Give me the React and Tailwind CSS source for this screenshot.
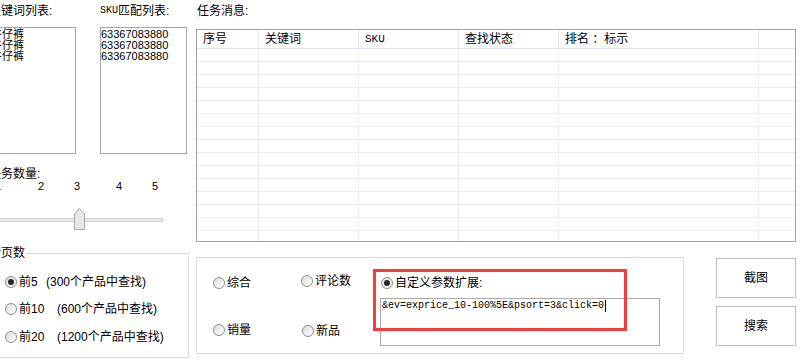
import React from "react";

const columns = ["序号", "关键词", "SKU", "查找状态", "排名 ：标示", ""];
const rows = Array.from({ length: 15 });

function Radio({ checked }) {
  return (
    <span className="flex h-[12px] w-[12px] shrink-0 items-center justify-center rounded-full border border-[#8e8e8e] bg-gradient-to-br from-[#dcdcdc] to-white">
      {checked && <span className="h-[6px] w-[6px] rounded-full bg-[#262626]" />}
    </span>
  );
}

function RadioItem({ checked, children, className = "" }) {
  return (
    <div className={"flex h-[14px] items-center " + className}>
      <Radio checked={checked} />
      <span className="ml-[2px] flex text-[12px] leading-[14px] whitespace-nowrap">{children}</span>
    </div>
  );
}

function ListBox({ items, mono }) {
  return (
    <div className="h-[127px] w-[87px] overflow-hidden border border-[#a6a6a6] bg-white pt-[1px]">
      {items.map((it, i) => (
        <div key={i} className={mono ? "text-[11px] leading-[11px]" : "text-[11px] leading-[11px] pl-[1px]"}>
          {it}
        </div>
      ))}
    </div>
  );
}

function TaskTable() {
  // 表格列宽: 62 / 100 / 100 / 100 / 200 / 36
  const grid = "grid grid-cols-[62px_100px_100px_100px_200px_36px]";
  return (
    <div className="mt-[12px] h-[213px] w-[600px] overflow-hidden border border-[#a0a0a0] bg-white">
      <div className={grid + " h-[19px] border-b border-[#dfe6ef]"}>
        {columns.map((c, i) => (
          <div
            key={i}
            className={
              "flex items-center pl-[6px] text-[12px] leading-[12px] whitespace-nowrap " +
              (i < 5 ? "border-r border-[#e4e9f0]" : "")
            }
          >
            {c === "SKU" ? <span className="font-['Liberation_Mono',monospace] text-[11px]">SKU</span> : c}
          </div>
        ))}
      </div>
      {rows.map((_, r) => (
        <div key={r} className={grid + " h-[13px] border-b border-[#ededed]"}>
          {columns.map((_, i) => (
            <div key={i} className={i < 5 ? "border-r border-[#ededed]" : ""} />
          ))}
        </div>
      ))}
    </div>
  );
}

export default function App() {
  return (
    <div className="relative flex h-[363px] w-[809px] overflow-hidden bg-white font-['Liberation_Sans','Noto_Sans_CJK_SC',sans-serif] text-black">
      {/* === 左侧: 列表 + 任务数量 + 搜索页数 === */}
      <div className="-ml-[11px] flex w-[200px] shrink-0 flex-col pt-[5px]">
        <div className="flex gap-[24px]">
          <div className="w-[87px]">
            <div className="text-[12px] leading-[12px] whitespace-nowrap">关键词列表:</div>
            <div className="mt-[10px]">
              <ListBox items={["牛仔裤", "牛仔裤", "牛仔裤"]} />
            </div>
          </div>
          <div className="w-[87px]">
            <div className="flex items-end text-[12px] leading-[12px] whitespace-nowrap">
              <span className="font-['Liberation_Mono',monospace] text-[10px] leading-[12px]">SKU</span>
              匹配列表:
            </div>
            <div className="mt-[10px]">
              <ListBox mono items={["63367083880", "63367083880", "63367083880"]} />
            </div>
          </div>
        </div>

        <div className="mt-[14px] text-[12px] leading-[12px] whitespace-nowrap">任务数量:</div>
        <div className="mt-[1px] flex h-[11px] text-[11px] leading-[11px]">
          <span className="ml-[4px] w-[10px] text-center">1</span>
          <span className="ml-[33px] w-[10px] text-center">2</span>
          <span className="ml-[26px] w-[10px] text-center">3</span>
          <span className="ml-[32px] w-[10px] text-center">4</span>
          <span className="ml-[26px] w-[10px] text-center">5</span>
        </div>
        <div className="relative mt-[16px] h-[22px]">
          <div className="mt-[10px] h-[4px] w-[174px] border border-[#d2d2d2] bg-[#e6e6e6]" />
          <svg className="absolute left-[85px] top-0" width="12" height="22" viewBox="0 0 12 22">
            <polygon points="0.5,6 5.5,0.5 10.5,6 10.5,21.5 0.5,21.5" fill="#e8e8e8" stroke="#a9a9a9" />
          </svg>
        </div>

        <div className="relative -ml-[21px] mt-[23px] h-[105px] w-[221px] shrink-0 border border-[#dcdcdc] pl-[36px] pt-[21px]">
          <span className="absolute -top-[7px] left-[7px] bg-white px-[1px] text-[12px] leading-[12px]">搜索页数</span>
          <RadioItem checked>
            <span className="w-[27px]">前5</span>
            <span>(300个产品中查找)</span>
          </RadioItem>
          <RadioItem className="mt-[13px]">
            <span className="w-[38px]">前10</span>
            <span>(600个产品中查找)</span>
          </RadioItem>
          <RadioItem className="mt-[14px]">
            <span className="w-[38px]">前20</span>
            <span>(1200个产品中查找)</span>
          </RadioItem>
        </div>
      </div>

      {/* === 右侧: 任务消息 + 排序选项 + 按钮 === */}
      <div className="ml-[7px] flex w-[600px] shrink-0 flex-col pt-[5px]">
        <div className="pl-[1px] text-[12px] leading-[12px] whitespace-nowrap">任务消息:</div>
        <TaskTable />

        <div className="mt-[15px] flex">
          <div className="flex h-[97px] w-[488px] border border-[#dcdcdc] pl-[16px]">
            <div className="flex w-[88px] flex-col pt-[18px]">
              <RadioItem>综合</RadioItem>
              <RadioItem className="mt-[33px]">销量</RadioItem>
            </div>
            <div className="flex w-[80px] flex-col pt-[16px]">
              <RadioItem>评论数</RadioItem>
              <RadioItem className="ml-[1px] mt-[36px]">新品</RadioItem>
            </div>
            <div className="flex flex-col pt-[18px]">
              <RadioItem checked>自定义参数扩展:</RadioItem>
              <div className="-ml-[1px] mt-[8px] h-[48px] w-[280px] border border-[#ababab] bg-white pl-[1px] pt-[1px]">
                <div className="flex items-center font-['Liberation_Mono',monospace] text-[10px] leading-[12px] whitespace-nowrap">
                  &amp;ev=exprice_10-100%5E&amp;psort=3&amp;click=0
                  <span className="ml-[1px] inline-block h-[12px] w-[1px] bg-black" />
                </div>
              </div>
            </div>
          </div>

          <div className="ml-[32px] mt-[1px] flex flex-col gap-[8px]">
            <button className="h-[40px] w-[80px] border border-[#bdbdbd] bg-white text-[12px]">截图</button>
            <button className="h-[40px] w-[80px] border border-[#bdbdbd] bg-white text-[12px]">搜索</button>
          </div>
        </div>
      </div>

      {/* 红色标注框 */}
      <div className="pointer-events-none absolute left-[373px] top-[269px] h-[62px] w-[254px] border-[3px] border-[#f63b3b]" />
    </div>
  );
}
